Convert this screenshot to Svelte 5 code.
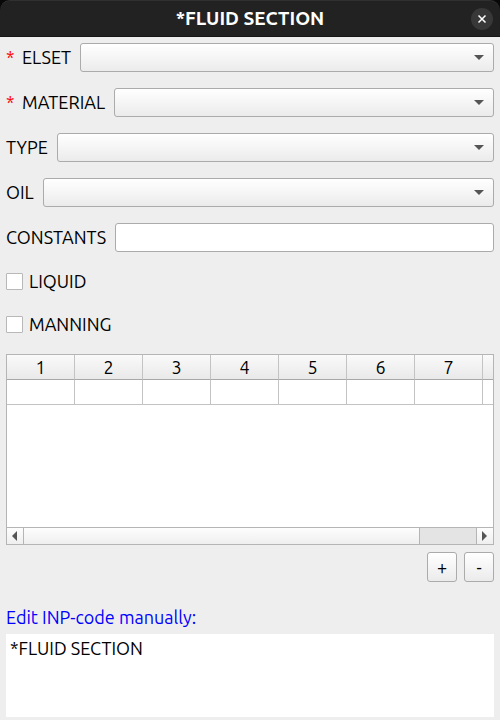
<script>
  const fields = [
    { id: 'elset', label: 'ELSET', required: true, kind: 'select' },
    { id: 'material', label: 'MATERIAL', required: true, kind: 'select' },
    { id: 'type', label: 'TYPE', kind: 'select' },
    { id: 'oil', label: 'OIL', kind: 'select' },
    { id: 'constants', label: 'CONSTANTS', kind: 'text' }
  ];
  const flags = ['LIQUID', 'MANNING'];
  const columns = [1, 2, 3, 4, 5, 6, 7];
  let code = $state('*FLUID SECTION');
</script>

<div class="dialog">
  <header>
    <h1>*FLUID SECTION</h1>
    <button class="close" aria-label="Close">
      <svg viewBox="0 0 22 22" width="22" height="22" aria-hidden="true">
        <path d="M7.5 7.5 14.5 14.5M14.5 7.5 7.5 14.5" stroke="#fff" stroke-width="1.5" fill="none" />
      </svg>
    </button>
  </header>

  <main>
    <div class="fields">
      {#each fields as field (field.id)}
        <div class="field">
          {#if field.required}<span class="star">*</span>{/if}
          <label for={field.id}>{field.label}</label>
          {#if field.kind === 'select'}
            <div class="combo">
              <select id={field.id}><option value=""></option></select>
              <svg class="arrow" viewBox="0 0 10 5" width="10" height="5" aria-hidden="true">
                <path d="M0 0H10L5 5Z" fill="#555" />
              </svg>
            </div>
          {:else}
            <input class="text" id={field.id} type="text" />
          {/if}
        </div>
      {/each}
    </div>

    <div class="flags">
      {#each flags as flag (flag)}
        <label class="flag"><input type="checkbox" />{flag}</label>
      {/each}
    </div>

    <div class="grid">
      <table>
        <colgroup>
          {#each columns as n (n)}<col class="data" />{/each}
          <col />
        </colgroup>
        <thead>
          <tr>{#each columns as n (n)}<th scope="col">{n}</th>{/each}<td></td></tr>
        </thead>
        <tbody>
          <tr>{#each columns as n (n)}<td></td>{/each}<td></td></tr>
        </tbody>
      </table>
      <div class="scrollbar">
        <button aria-label="Scroll left">
          <svg viewBox="0 0 5 10" width="5" height="10" aria-hidden="true"><path d="M5 0V10L0 5Z" fill="#555" /></svg>
        </button>
        <div class="track"><div class="thumb"></div></div>
        <button aria-label="Scroll right">
          <svg viewBox="0 0 5 10" width="5" height="10" aria-hidden="true"><path d="M0 0V10L5 5Z" fill="#555" /></svg>
        </button>
      </div>
    </div>

    <div class="actions">
      <button aria-label="Add row">+</button>
      <button aria-label="Remove row">-</button>
    </div>

    <label class="code-label" for="code">Edit INP-code manually:</label>
    <textarea id="code" bind:value={code} spellcheck="false"></textarea>
  </main>
</div>

<style>
  :global(body) {
    margin: 0;
    background: #080808;
  }
  .dialog,
  .dialog * {
    box-sizing: border-box;
  }
  .dialog {
    display: flex;
    flex-direction: column;
    min-height: 100vh;
    color: #000;
    font: 18px/24px Ubuntu, 'Noto Sans', sans-serif;
  }
  button,
  input,
  select,
  textarea {
    margin: 0;
    padding: 0;
    border: 0;
    border-radius: 0;
    color: inherit;
    font: inherit;
  }
  header {
    display: grid;
    grid-template-columns: 1fr auto 1fr;
    align-items: center;
    height: 37px;
    padding: 0 7px;
    border-top: 1px solid #303030;
    border-bottom: 1px solid #161616;
    border-radius: 10px 10px 0 0;
    background: #222;
    color: #fff;
  }
  h1 {
    grid-column: 2;
    margin: 0;
    padding-bottom: 2px;
    font-size: 19px;
    font-weight: 700;
    line-height: 24px;
  }
  .close {
    justify-self: end;
    grid-column: 3;
    width: 22px;
    height: 22px;
    border-radius: 50%;
    background: #383838;
  }
  .close svg {
    display: block;
  }
  main {
    display: flex;
    flex: 1;
    flex-direction: column;
    padding: 6px 6px 3px;
    background: #eee;
  }
  .fields {
    display: flex;
    flex-direction: column;
    gap: 16px;
  }
  .field {
    display: flex;
    align-items: center;
    height: 29px;
  }
  .field label {
    flex: none;
    margin-right: 9px;
    padding-bottom: 2px;
    white-space: nowrap;
  }
  .star {
    width: 16px;
    padding-bottom: 2px;
    color: #f00;
  }
  .combo {
    display: grid;
    flex: 1;
    align-items: center;
  }
  .combo select,
  .arrow {
    grid-area: 1 / 1;
  }
  .arrow {
    justify-self: end;
    margin-right: 10px;
    pointer-events: none;
  }
  select {
    width: 100%;
    height: 29px;
    appearance: none;
    border: 1px solid #ababab;
    border-radius: 3px;
    background: linear-gradient(#fff, #ebebeb);
  }
  .text {
    flex: 1;
    min-width: 0;
    height: 29px;
    padding: 0 4px;
    border: 1px solid #ababab;
    border-radius: 3px;
    background: #fff;
  }
  .flags {
    display: flex;
    flex-direction: column;
    gap: 19px;
    margin: 17px 0 18px;
  }
  .flag {
    display: flex;
    align-items: center;
    gap: 6px;
  }
  .flag input {
    width: 17px;
    height: 17px;
    appearance: none;
    border: 1px solid #b8b8b8;
    border-radius: 1px;
    background: #fff;
  }
  .grid {
    display: flex;
    flex-direction: column;
    justify-content: space-between;
    height: 191px;
    border: 1px solid #b5b5b5;
    background: #fff;
  }
  table {
    width: 100%;
    table-layout: fixed;
    border-spacing: 0;
  }
  .data {
    width: 68px;
  }
  th,
  td {
    height: 25px;
    padding: 0;
    border-right: 1px solid #c3c3c3;
    border-bottom: 1px solid #c3c3c3;
    font-weight: 400;
    line-height: 24px;
  }
  thead th,
  thead td {
    border-bottom-color: #a8a8a8;
    background: linear-gradient(#fafafa, #e9e9e9);
  }
  tr > :last-child {
    border-right: 0;
  }
  .scrollbar {
    display: flex;
    height: 17px;
    border-top: 1px solid #b5b5b5;
  }
  .scrollbar button {
    display: grid;
    place-items: center;
    width: 16px;
    padding-right: 2px;
    background: linear-gradient(#fdfdfd, #efefef);
  }
  .track {
    flex: 1;
    border: solid #b5b5b5;
    border-width: 0 1px;
    background: #e4e4e4;
  }
  .thumb {
    width: calc(100% * 7 / 8);
    height: 100%;
    border-right: 1px solid #b5b5b5;
    background: linear-gradient(#fdfdfd, #efefef);
  }
  .actions {
    display: flex;
    justify-content: flex-end;
    gap: 7px;
    margin-top: 7px;
  }
  .actions button {
    width: 30px;
    height: 30px;
    border: 1px solid #ababab;
    border-radius: 3px;
    background: linear-gradient(#fff, #ebebeb);
  }
  .code-label {
    margin: 23px 0 5px;
    color: #00f;
  }
  textarea {
    flex: 1;
    width: 100%;
    min-height: 80px;
    padding: 2px 4px;
    background: #fff;
    resize: none;
    outline: 0;
  }
</style>
